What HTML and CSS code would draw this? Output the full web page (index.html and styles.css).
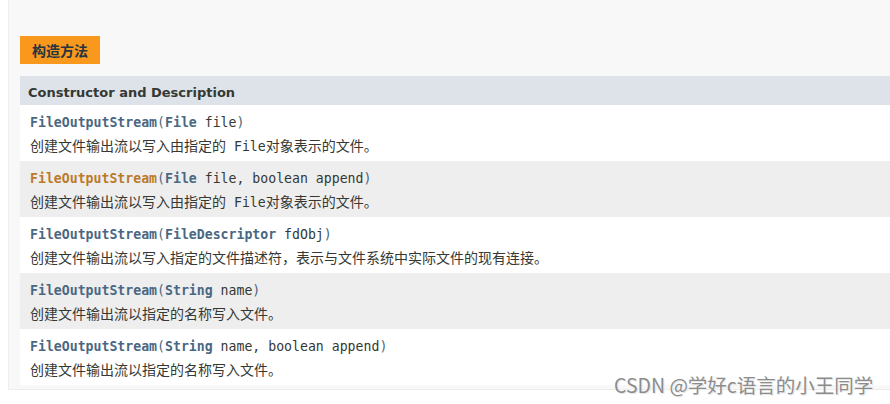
FILE: index.html
```html
<!DOCTYPE html>
<html lang="zh">
<head>
<meta charset="utf-8">
<link rel="stylesheet" href="styles.css">
</head>
<body>
<div class="panel">
  <div class="caption"><span class="caption-tab">构造方法</span></div>
  <div class="table">
    <div class="head">Constructor and Description</div>
    <div class="row">
      <div class="sig"><b class="name">FileOutputStream</b><span class="par">(</span><b class="type">File</b> file<span class="par">)</span></div>
      <div class="desc">创建文件输出流以写入由指定的<code> File</code>对象表示的文件。</div>
    </div>
    <div class="row alt">
      <div class="sig"><b class="name hover">FileOutputStream</b><span class="par">(</span><b class="type">File</b> file, boolean append<span class="par">)</span></div>
      <div class="desc">创建文件输出流以写入由指定的<code> File</code>对象表示的文件。</div>
    </div>
    <div class="row">
      <div class="sig"><b class="name">FileOutputStream</b><span class="par">(</span><b class="type">FileDescriptor</b> fdObj<span class="par">)</span></div>
      <div class="desc">创建文件输出流以写入指定的文件描述符，表示与文件系统中实际文件的现有连接。</div>
    </div>
    <div class="row alt">
      <div class="sig"><b class="name">FileOutputStream</b><span class="par">(</span><b class="type">String</b> name<span class="par">)</span></div>
      <div class="desc">创建文件输出流以指定的名称写入文件。</div>
    </div>
    <div class="row">
      <div class="sig"><b class="name">FileOutputStream</b><span class="par">(</span><b class="type">String</b> name, boolean append<span class="par">)</span></div>
      <div class="desc">创建文件输出流以指定的名称写入文件。</div>
    </div>
  </div>
</div>
<div class="watermark">CSDN @学好c语言的小王同学</div>
</body>
</html>
```
FILE: styles.css
```css
html, body {
  margin: 0;
  padding: 0;
  background: #ffffff;
  overflow: hidden;
  width: 890px;
  height: 404px;
}
body {
  position: relative;
  font-family: "DejaVu Sans", "Noto Sans CJK SC", sans-serif;
  color: #353833;
}
.panel {
  margin-left: 8px;
  width: 1000px;
  background: #f8f8f8;
  border: 1px solid #ededed;
  border-top: none;
  padding: 36px 0 4px 11px;
}
.caption {
  display: flex;
  height: 28px;
  margin-bottom: 12px;
}
.caption-tab {
  display: flex;
  align-items: center;
  background: #f8981d;
  color: #253441;
  font-family: "Noto Sans CJK SC", sans-serif;
  font-weight: bold;
  font-size: 14px;
  padding: 0 12px;
  width: 56px;
}
.table {
  display: flex;
  flex-direction: column;
}
.head {
  height: 29px;
  background: #dee3e9;
  display: flex;
  align-items: center;
  padding-left: 8px;
  font-weight: bold;
  font-size: 13px;
  color: #353833;
  padding-top: 3px;
  box-sizing: border-box;
}
.row {
  height: 56px;
  box-sizing: border-box;
  background: #ffffff;
  padding: 7px 0 0 10px;
}
.row.alt {
  background: #eeeeef;
}
.sig {
  font-family: "DejaVu Sans Mono", monospace;
  font-size: 13.2px;
  line-height: 22px;
  height: 22px;
  white-space: pre;
  color: #353833;
}
.name, .type {
  color: #4a6782;
  font-weight: bold;
}
.name.hover {
  color: #bb7a2a;
}
.par {
  color: #4a6782;
}
.desc {
  font-family: "Noto Sans CJK SC", sans-serif;
  font-size: 14px;
  line-height: 23px;
  height: 24px;
  color: #353833;
  white-space: pre;
}
.desc code {
  font-family: "DejaVu Sans Mono", monospace;
  font-size: 13.2px;
}
.watermark {
  position: absolute;
  left: 614px;
  top: 371px;
  font-family: "Noto Sans CJK SC", sans-serif;
  font-size: 19.5px;
  line-height: 28px;
  color: #8c8c8c;
  text-shadow: 0 0 1px #ffffff, 1px 1px 0 #e6e6e6;
  white-space: nowrap;
}
```
